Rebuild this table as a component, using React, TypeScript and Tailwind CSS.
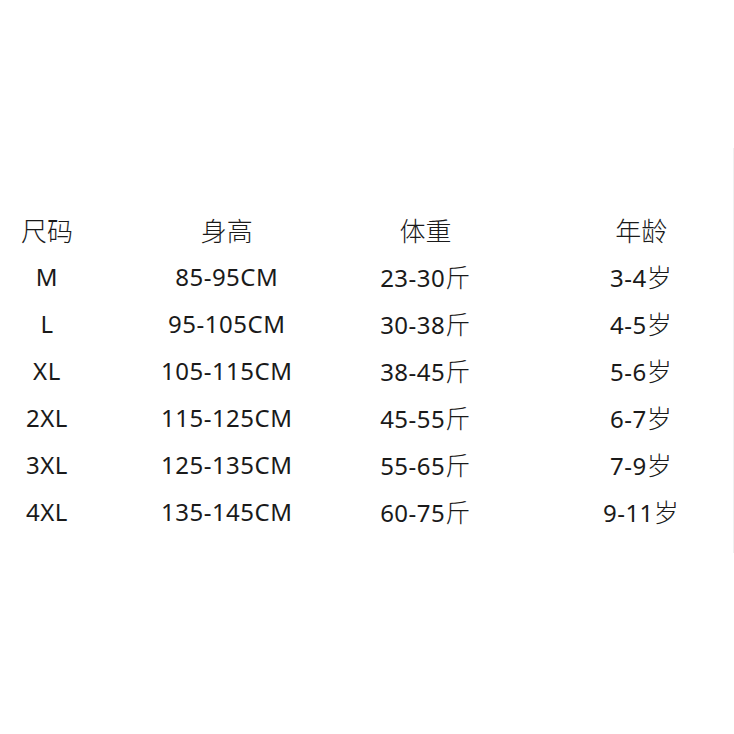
import React from 'react';

const rows = [
  { size: 'M', height: '85-95CM', weight: '23-30', age: '3-4' },
  { size: 'L', height: '95-105CM', weight: '30-38', age: '4-5' },
  { size: 'XL', height: '105-115CM', weight: '38-45', age: '5-6' },
  { size: '2XL', height: '115-125CM', weight: '45-55', age: '6-7' },
  { size: '3XL', height: '125-135CM', weight: '55-65', age: '7-9' },
  { size: '4XL', height: '135-145CM', weight: '60-75', age: '9-11' },
];

const cjk = "font-['Noto_Sans_CJK_SC',sans-serif] font-light";

const App: React.FC = () => {
  return (
    <div className="w-full h-[734px] bg-white pt-[148px] font-['Noto_Sans','Noto_Sans_CJK_SC',sans-serif] text-[#1a1a1a]">
      <div className="h-[405px] border-r border-[#f0f0f0] pt-[58px]">
        {/* header */}
        <div className={`flex h-[47px] items-center text-[26px] leading-[47px] ${cjk}`}>
          <div className="w-[94px] text-center">尺码</div>
          <div className="ml-[58px] w-[150px] text-center">身高</div>
          <div className="w-[248px] text-center">体重</div>
          <div className="w-[184px] text-center">年龄</div>
        </div>

        {rows.map((r) => (
          <div key={r.size} className="flex h-[47px] items-center text-[24px] leading-[47px] tracking-[0.5px]">
            <div className="w-[94px] text-center">{r.size}</div>
            <div className="ml-[58px] w-[150px] text-center whitespace-nowrap">{r.height}</div>
            <div className="w-[248px] text-center whitespace-nowrap">
              {r.weight}
              <span className={`text-[25px] ${cjk}`}>斤</span>
            </div>
            <div className="w-[184px] text-center whitespace-nowrap">
              {r.age}
              <span className={`text-[25px] ${cjk}`}>岁</span>
            </div>
          </div>
        ))}
      </div>
    </div>
  );
};

export default App;
